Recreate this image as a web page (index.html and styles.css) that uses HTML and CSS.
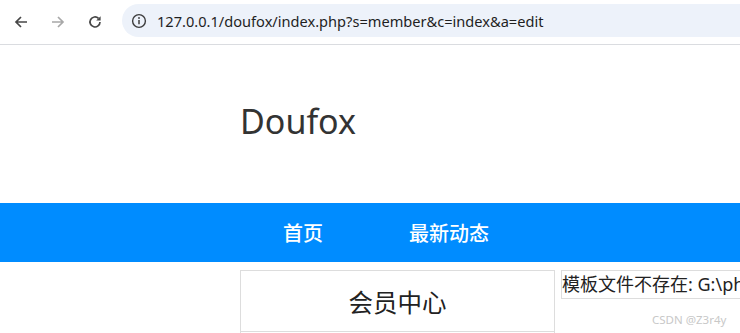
FILE: index.html
```html
<!DOCTYPE html>
<html lang="zh-CN">
  <head>
    <meta charset="UTF-8" />
    <meta name="viewport" content="width=device-width, initial-scale=1.0" />
    <title>Doufox</title>
    <link rel="stylesheet" href="styles.css">
  </head>
  <body>
    <!-- 浏览器工具栏 -->
    <div class="toolbar">
      <span class="tool-btn">
        <svg width="16" height="16" viewBox="0 0 16 16"><path d="M14 8H3M8 3L3 8l5 5" fill="none" stroke="#474747" stroke-width="1.7"/></svg>
      </span>
      <span class="tool-btn">
        <svg width="16" height="16" viewBox="0 0 16 16"><path d="M2 8h11M8 3l5 5-5 5" fill="none" stroke="#a8a8a8" stroke-width="1.7"/></svg>
      </span>
      <span class="tool-btn">
        <svg width="16" height="16" viewBox="0 0 16 16"><path d="M13 8a5 5 0 1 1-1.5-3.6" fill="none" stroke="#474747" stroke-width="1.7"/><path d="M13.6 2.2v4.4H9.2z" fill="#474747"/></svg>
      </span>
      <div class="omnibox">
        <span class="site-info">
          <svg width="16" height="16" viewBox="0 0 16 16"><circle cx="8" cy="8" r="6.4" fill="none" stroke="#3c3c3c" stroke-width="1.4"/><path d="M8 7v4.3" stroke="#3c3c3c" stroke-width="1.5"/><circle cx="8" cy="5" r="0.9" fill="#3c3c3c"/></svg>
        </span>
        <span class="url">127.0.0.1/doufox/index.php?s=member&amp;c=index&amp;a=edit</span>
      </div>
    </div>

    <!-- 页面头部 -->
    <div class="header">
      <div class="container">
        <div class="logo">Doufox</div>
      </div>
    </div>

    <div class="nav">
      <div class="container nav-inner">
        <a href="#">首页</a>
        <a href="#">最新动态</a>
      </div>
    </div>

    <div class="container main">
      <div class="side">
        <div class="side-title">会员中心</div>
        <div class="side-body"></div>
      </div>
      <div class="error">模板文件不存在: G:\phpstudy_pro\WWW\doufox\template\default\member\edit.html</div>
    </div>

    <div class="watermark">CSDN @Z3r4y</div>
  </body>
</html>
```

FILE: styles.css
```css
body {
  margin: 0;
  font-family: "Noto Sans", "Noto Sans CJK SC", sans-serif;
  color: #333;
  overflow: hidden;
  width: 740px;
  height: 333px;
}
.toolbar {
  display: flex;
  align-items: center;
  height: 44px;
  border-bottom: 1px solid #dadce0;
  background: #fff;
}
.tool-btn {
  width: 36px;
  height: 40px;
  display: flex;
  align-items: center;
  justify-content: center;
  margin-left: 1px;
}
.tool-btn:first-child {
  margin-left: 3px;
}
.omnibox {
  flex: 1;
  display: flex;
  align-items: center;
  height: 33px;
  margin-left: 9px;
  margin-top: -3px;
  background: #edf2fa;
  border-radius: 17px 0 0 17px;
}
.site-info {
  width: 16px;
  height: 16px;
  margin-left: 9px;
  display: flex;
}
.url {
  margin-left: 10px;
  font-size: 14.6px;
  color: #1f1f1f;
  white-space: nowrap;
}
.container {
  padding-left: 240px;
}
.header {
  height: 158px;
  display: flex;
  align-items: center;
}
.logo {
  font-size: 34px;
  color: #333;
  margin-bottom: 6px;
}
.nav {
  background: #008cff;
  height: 59px;
}
.nav-inner {
  display: flex;
  align-items: center;
  height: 100%;
}
.nav a {
  color: #fff;
  text-decoration: none;
  font-size: 20px;
  font-weight: 500;
  padding: 0 43px;
}
.main {
  display: flex;
  align-items: flex-start;
  gap: 6px;
  margin-top: 8px;
}
.side {
  width: 313px;
  flex-shrink: 0;
  border: 1px solid #ddd;
}
.side-title {
  height: 60px;
  display: flex;
  align-items: center;
  justify-content: center;
  font-size: 24.5px;
  color: #222;
  border-bottom: 1px solid #ddd;
}
.side-body {
  height: 40px;
}
.error {
  border: 1px solid #ddd;
  font-size: 18px;
  line-height: 27px;
  color: #222;
  white-space: nowrap;
}
.watermark {
  position: absolute;
  left: 652px;
  top: 312px;
  font-size: 11.5px;
  color: #c8c8c8;
}
```
